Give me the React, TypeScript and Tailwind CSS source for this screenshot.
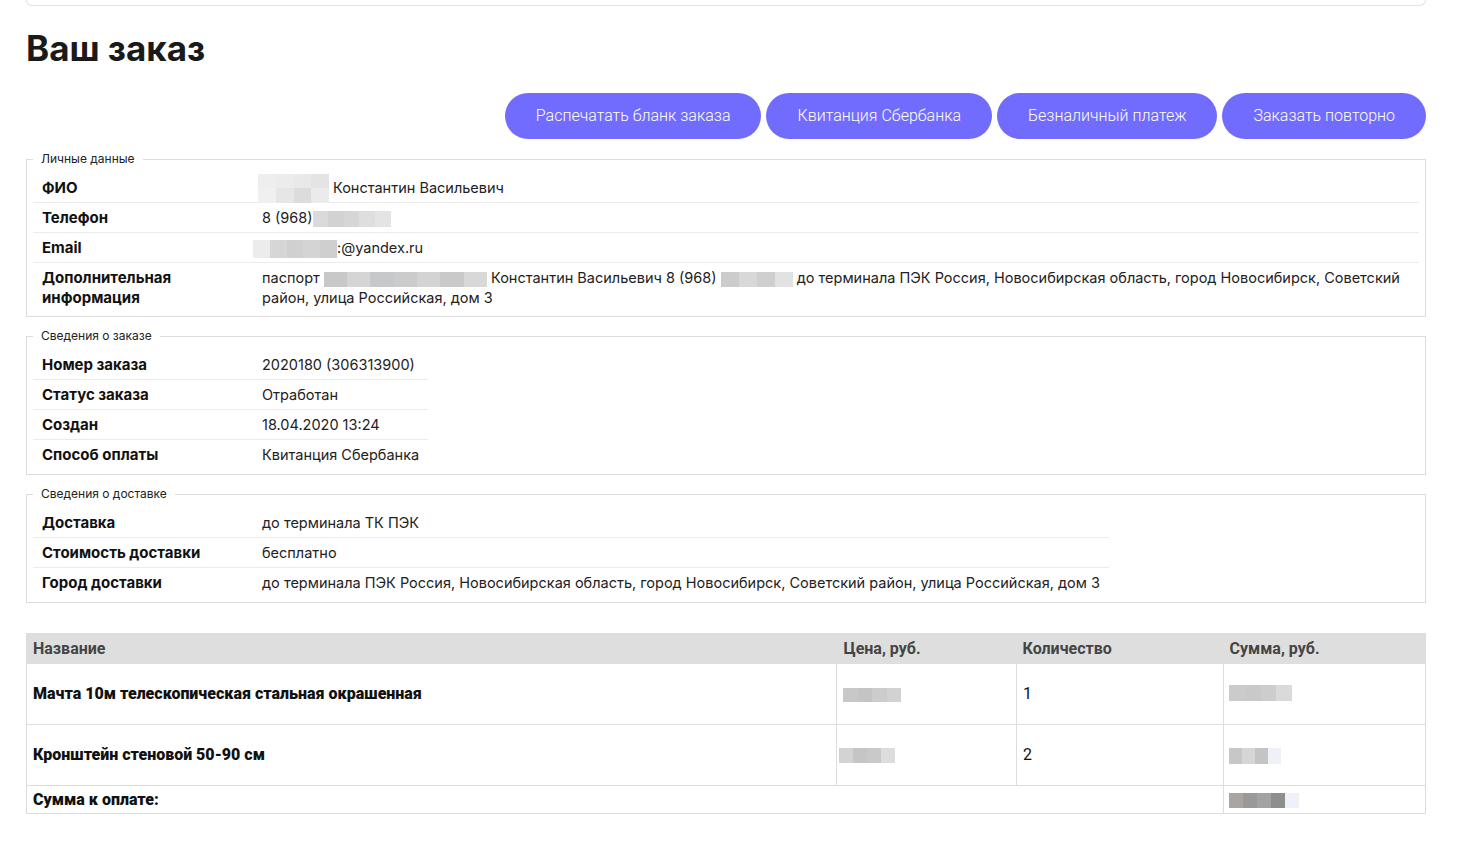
const sans = "font-['Inter','Noto_Sans',sans-serif]"
const narrow = "font-['Roboto','Liberation_Sans',sans-serif]"

function Blur({ className, cells }: { className: string; cells: string[] }) {
  return (
    <span className={`inline-flex align-middle ${className}`}>
      {cells.map((c, i) => (
        <span key={i} className={`h-full flex-1 ${c}`} />
      ))}
    </span>
  )
}

function Row({ label, children, last }: { label: React.ReactNode; children: React.ReactNode; last?: boolean }) {
  return (
    <tr className={last ? "" : "border-b border-[#ebebeb]"}>
      <th className="w-[229px] pb-[4px] pl-[9px] pr-[9px] pt-[5px] text-left align-top text-[15px] font-bold text-[#111]">{label}</th>
      <td className="pb-[4px] pl-0 pr-[9px] pt-[5px] align-top text-[14.5px] text-[#222]">{children}</td>
    </tr>
  )
}

function Group({ title, children, full }: { title: string; children: React.ReactNode; full?: boolean }) {
  return (
    <fieldset className={`border border-[#dcdcdc] px-[6px] pt-[6px] ${full ? "pb-[4px]" : "pb-[5px]"}`}>
      <legend className="ml-0 px-[8px] text-[12px] leading-[16px] text-[#222]">{title}</legend>
      <table className={`${full ? "w-full" : ""} border-collapse leading-[20px]`}>
        <tbody>{children}</tbody>
      </table>
    </fieldset>
  )
}

export default function App() {
  return (
    <div className={`min-h-screen bg-white ${sans}`}>
      <div className="ml-[26px] w-[1400px] pb-10">
        <div className="h-[6px] rounded-b-md border border-t-0 border-[#e3e3e3]" />

        <h1 className="mt-[20px] text-[35px] font-bold leading-[44px] text-[#1a1a1a]">Ваш заказ</h1>

        <div className={`mt-[23px] flex justify-end gap-[5px] ${narrow}`}>
          {["Распечатать бланк заказа", "Квитанция Сбербанка", "Безналичный платеж", "Заказать повторно"].map((t) => (
            <button
              key={t}
              className="h-[46px] rounded-full bg-[#726cfe] px-[31px] text-[16px] font-light text-white"
            >
              {t}
            </button>
          ))}
        </div>

        <div className="mt-[12px] flex flex-col gap-[11px]">
          <Group title="Личные данные" full>
            <Row label="ФИО">
              <span className="flex h-[20px] items-center">
                <span className="-ml-[4px] mr-[4px] inline-flex h-[29px] w-[71px] flex-col">
                  <Blur className="h-1/2 w-full" cells={["bg-[#eeeeee]", "bg-[#ececec]", "bg-[#e9e9e9]", "bg-[#e4e4e4]"]} />
                  <Blur className="h-1/2 w-full" cells={["bg-[#f0f0f0]", "bg-[#e6e6e6]", "bg-[#dcdcdc]", "bg-[#ebebeb]"]} />
                </span>
                Константин Васильевич
              </span>
            </Row>
            <Row label="Телефон">
              8 (968)
              <Blur className="h-[16px] w-[78px]" cells={["bg-[#dadada]", "bg-[#d2d2d2]", "bg-[#d6d6d6]", "bg-[#dedede]", "bg-[#e4e4e4]"]} />
            </Row>
            <Row label="Email">
              <Blur className="-ml-[9px] h-[18px] w-[84px]" cells={["bg-[#ececec]", "bg-[#d6d6d6]", "bg-[#d0d0d0]", "bg-[#d4d4d4]", "bg-[#cfcfcf]"]} />
              <span>:@yandex.ru</span>
            </Row>
            <Row label={<>Дополнительная<br />информация</>} last>
              паспорт{" "}
              <Blur className="h-[15px] w-[163px]" cells={["bg-[#c8c8c8]", "bg-[#d5d5d5]", "bg-[#c6c8ca]", "bg-[#cbcbcb]", "bg-[#d3d3d3]", "bg-[#c9c9c9]", "bg-[#d8d8d8]"]} />{" "}
              Константин Васильевич 8 (968){" "}
              <Blur className="h-[15px] w-[72px]" cells={["bg-[#cccccc]", "bg-[#d8d8d8]", "bg-[#cfcfcf]", "bg-[#e2e2e2]"]} />{" "}
              до терминала ПЭК Россия, Новосибирская область, город Новосибирск, Советский район, улица Российская, дом 3
            </Row>
          </Group>

          <Group title="Сведения о заказе">
            <Row label="Номер заказа">2020180 (306313900)</Row>
            <Row label="Статус заказа">Отработан</Row>
            <Row label="Создан">18.04.2020 13:24</Row>
            <Row label="Способ оплаты" last>Квитанция Сбербанка</Row>
          </Group>

          <Group title="Сведения о доставке">
            <Row label="Доставка">до терминала ТК ПЭК</Row>
            <Row label="Стоимость доставки">бесплатно</Row>
            <Row label="Город доставки" last>
              до терминала ПЭК Россия, Новосибирская область, город Новосибирск, Советский район, улица Российская, дом 3
            </Row>
          </Group>
        </div>

        <table className={`mt-[30px] w-full border-collapse border border-[#dddddd] text-[16px] leading-[20px] text-[#111] ${narrow}`}>
          <thead>
            <tr className="h-[30px] bg-[#dedede] text-left font-black text-[#444]">
              <th className="px-[6px]">Название</th>
              <th className="w-[180px] px-[7px]">Цена, руб.</th>
              <th className="w-[207px] px-[6px]">Количество</th>
              <th className="w-[202px] px-[6px]">Сумма, руб.</th>
            </tr>
          </thead>
          <tbody>
            <tr className="h-[61px] border-b border-[#dddddd]">
              <td className="px-[6px] font-black">Мачта 10м телескопическая стальная окрашенная</td>
              <td className="border-l border-[#dddddd] px-[6px]">
                <Blur className="h-[14px] w-[58px]" cells={["bg-[#c8c8c8]", "bg-[#c4c4c4]", "bg-[#cccccc]", "bg-[#d2d2d2]"]} />
              </td>
              <td className="border-l border-[#dddddd] px-[6px]">1</td>
              <td className="border-l border-[#dddddd] px-[5px]">
                <Blur className="-mt-[4px] h-[16px] w-[63px]" cells={["bg-[#cbcbcb]", "bg-[#c9c9c9]", "bg-[#cdcdcd]", "bg-[#dadada]"]} />
              </td>
            </tr>
            <tr className="h-[61px] border-b border-[#dddddd]">
              <td className="px-[6px] font-black">Кронштейн стеновой 50-90 см</td>
              <td className="border-l border-[#dddddd] px-[2px]">
                <Blur className="h-[15px] w-[56px]" cells={["bg-[#d3d3d3]", "bg-[#c5c5c5]", "bg-[#c9c9c9]", "bg-[#dddddd]"]} />
              </td>
              <td className="border-l border-[#dddddd] px-[6px]">2</td>
              <td className="border-l border-[#dddddd] px-[5px]">
                <Blur className="h-[16px] w-[52px]" cells={["bg-[#c7c7c7]", "bg-[#d6d6d6]", "bg-[#c4c4c4]", "bg-[#eef2f8]"]} />
              </td>
            </tr>
            <tr className="h-[28px]">
              <td colSpan={3} className="px-[6px] font-black">Сумма к оплате:</td>
              <td className="border-l border-[#dddddd] px-[5px]">
                <Blur className="h-[15px] w-[70px]" cells={["bg-[#a8a5a3]", "bg-[#999999]", "bg-[#a3a3a3]", "bg-[#8e8e8e]", "bg-[#eef2f8]"]} />
              </td>
            </tr>
          </tbody>
        </table>
      </div>
    </div>
  )
}
